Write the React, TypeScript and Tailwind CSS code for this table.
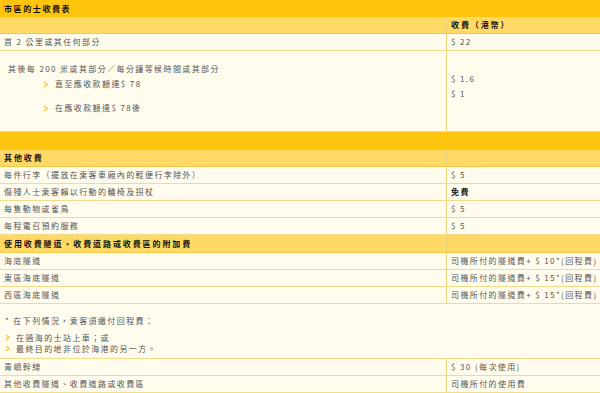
import React from 'react';

const font = { fontFamily: '"Noto Sans CJK TC", "Noto Sans", sans-serif' };

const Arrow = () => (
  <svg width="5" height="7" viewBox="0 0 5 7" className="shrink-0">
    <polyline points="1,1 4,3.5 1,6" fill="none" stroke="#f5cd45" strokeWidth="1.6" />
  </svg>
);

const Row = ({ left, right, bold = false }: { left: React.ReactNode; right: React.ReactNode; bold?: boolean }) => (
  <div className="grid grid-cols-[447px_1fr] h-[17px] border-b border-[#f0dc8c] bg-[#fffcee]">
    <div className="flex items-center pl-[4px] border-r border-[#ecd27a] overflow-hidden whitespace-nowrap">{left}</div>
    <div className={`flex items-center pl-[4px] overflow-hidden whitespace-nowrap ${bold ? 'text-[#111] font-bold' : ''}`}>{right}</div>
  </div>
);

const SubHeader = ({ text, right = '', tall = false }: { text: string; right?: string; tall?: boolean }) => (
  <div className={`grid grid-cols-[447px_1fr] ${tall ? 'h-[18px]' : 'h-[17px]'} bg-[#ffd966] border-b border-[#f4c94a] font-bold tracking-[1.9px] text-[#111]`}>
    <div className="flex items-center pl-[4px] border-r border-[#ecd27a]">{text}</div>
    <div className="flex items-center pl-[4px]">{right}</div>
  </div>
);

export default function App() {
  return (
    <div
      className="w-[600px] h-[393px] overflow-hidden bg-[#fffcee] text-[8px] tracking-[1.4px] text-[#555] leading-[12px]"
      style={font}
    >
      <div className="h-[17px] bg-[#ffc40d] flex items-center pl-[4px] font-bold tracking-[1.6px] text-[#111]">市區的士收費表</div>
      <SubHeader text="" right="收費（港幣）" />
      <Row left="首 2 公里或其任何部分" right="$ 22" />

      <div className="grid grid-cols-[447px_1fr] h-[81px] border-b border-[#f0dc8c]">
        <div className="border-r border-[#ecd27a] pl-[8px] pt-[12px] flex flex-col">
          <div>其後每 200 米或其部分／每分鐘等候時間或其部分</div>
          <div className="flex items-center gap-[7px] pl-[35px] mt-[3px]">
            <Arrow />
            <span>直至應收款額達$ 78</span>
          </div>
          <div className="flex items-center gap-[7px] pl-[35px] mt-[12px]">
            <Arrow />
            <span>在應收款額達$ 78後</span>
          </div>
        </div>
        <div className="pl-[4px] pt-[22px] flex flex-col gap-[3px]">
          <div>$ 1.6</div>
          <div>$ 1</div>
        </div>
      </div>

      <div className="h-[18px] bg-[#ffc40d]" />
      <SubHeader text="其他收費" />
      <Row left="每件行李（擺放在乘客車廂內的輕便行李除外）" right="$ 5" />
      <Row left="傷殘人士乘客賴以行動的輪椅及拐杖" right="免費" bold />
      <Row left="每隻動物或雀鳥" right="$ 5" />
      <Row left="每程電召預約服務" right="$ 5" />
      <SubHeader text="使用收費隧道、收費道路或收費區的附加費" tall />
      <Row left="海底隧道" right="司機所付的隧道費+ $ 10*(回程費)" />
      <Row left="東區海底隧道" right="司機所付的隧道費+ $ 15*(回程費)" />
      <Row left="西區海底隧道" right="司機所付的隧道費+ $ 15*(回程費)" />

      <div className="h-[55px] border-b border-[#f0dc8c] pl-[5px] pt-[11px] flex flex-col">
        <div>* 在下列情況，乘客須繳付回程費：</div>
        <div className="flex items-center gap-[6px] mt-[5px] leading-[11px]">
          <Arrow />
          <span>在過海的士站上車；或</span>
        </div>
        <div className="flex items-center gap-[6px] leading-[11px]">
          <Arrow />
          <span>最終目的地非位於海港的另一方。</span>
        </div>
      </div>

      <Row left="青嶼幹線" right="$ 30 (每次使用)" />
      <Row left="其他收費隧道、收費道路或收費區" right="司機所付的使用費" />
    </div>
  );
}
